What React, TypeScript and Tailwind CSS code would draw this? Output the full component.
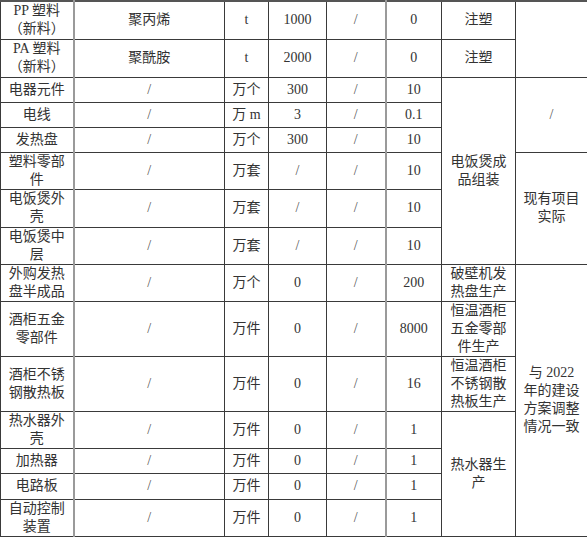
import React from 'react';

type Row = {
  h: string;
  cells: { text: string; rowSpan?: number; cls?: string }[];
};

const rows: Row[] = [
  {
    h: 'h-[38px]',
    cells: [
      { text: 'PP 塑料\n（新料）' },
      { text: '聚丙烯' },
      { text: 't' },
      { text: '1000' },
      { text: '/' },
      { text: '0' },
      { text: '注塑' },
      { text: '', rowSpan: 2 },
    ],
  },
  {
    h: 'h-[38px]',
    cells: [
      { text: 'PA 塑料\n（新料）' },
      { text: '聚酰胺' },
      { text: 't' },
      { text: '2000' },
      { text: '/' },
      { text: '0' },
      { text: '注塑' },
    ],
  },
  {
    h: 'h-[25px]',
    cells: [
      { text: '电器元件' },
      { text: '/' },
      { text: '万个' },
      { text: '300' },
      { text: '/' },
      { text: '10' },
      { text: '电饭煲成\n品组装', rowSpan: 6 },
      { text: '/', rowSpan: 3 },
    ],
  },
  {
    h: 'h-[25px]',
    cells: [
      { text: '电线' },
      { text: '/' },
      { text: '万 m' },
      { text: '3' },
      { text: '/' },
      { text: '0.1' },
    ],
  },
  {
    h: 'h-[25px]',
    cells: [
      { text: '发热盘' },
      { text: '/' },
      { text: '万个' },
      { text: '300' },
      { text: '/' },
      { text: '10' },
    ],
  },
  {
    h: 'h-[37px]',
    cells: [
      { text: '塑料零部\n件' },
      { text: '/' },
      { text: '万套' },
      { text: '/' },
      { text: '/' },
      { text: '10' },
      { text: '现有项目\n实际', rowSpan: 3 },
    ],
  },
  {
    h: 'h-[38px]',
    cells: [
      { text: '电饭煲外\n壳' },
      { text: '/' },
      { text: '万套' },
      { text: '/' },
      { text: '/' },
      { text: '10' },
    ],
  },
  {
    h: 'h-[36px]',
    cells: [
      { text: '电饭煲中\n层' },
      { text: '/' },
      { text: '万套' },
      { text: '/' },
      { text: '/' },
      { text: '10' },
    ],
  },
  {
    h: 'h-[37px]',
    cells: [
      { text: '外购发热\n盘半成品' },
      { text: '/' },
      { text: '万个' },
      { text: '0' },
      { text: '/' },
      { text: '200' },
      { text: '破壁机发\n热盘生产' },
      { text: '与 2022\n年的建设\n方案调整\n情况一致', rowSpan: 7 },
    ],
  },
  {
    h: 'h-[55px]',
    cells: [
      { text: '酒柜五金\n零部件' },
      { text: '/' },
      { text: '万件' },
      { text: '0' },
      { text: '/' },
      { text: '8000' },
      { text: '恒温酒柜\n五金零部\n件生产' },
    ],
  },
  {
    h: 'h-[55px]',
    cells: [
      { text: '酒柜不锈\n钢散热板' },
      { text: '/' },
      { text: '万件' },
      { text: '0' },
      { text: '/' },
      { text: '16' },
      { text: '恒温酒柜\n不锈钢散\n热板生产' },
    ],
  },
  {
    h: 'h-[37px]',
    cells: [
      { text: '热水器外\n壳' },
      { text: '/' },
      { text: '万件' },
      { text: '0' },
      { text: '/' },
      { text: '1' },
      { text: '热水器生\n产', rowSpan: 4 },
    ],
  },
  {
    h: 'h-[25px]',
    cells: [
      { text: '加热器' },
      { text: '/' },
      { text: '万件' },
      { text: '0' },
      { text: '/' },
      { text: '1' },
    ],
  },
  {
    h: 'h-[26px]',
    cells: [
      { text: '电路板' },
      { text: '/' },
      { text: '万件' },
      { text: '0' },
      { text: '/' },
      { text: '1' },
    ],
  },
  {
    h: 'h-[37px]',
    cells: [
      { text: '自动控制\n装置' },
      { text: '/' },
      { text: '万件' },
      { text: '0' },
      { text: '/' },
      { text: '1' },
    ],
  },
];

// column index -> extra border styling (col 1 right edge and col 6 left edge are grey, thicker)
function cellClass(col: number) {
  const base = 'border border-[#3a3a3a] px-1 py-0 text-center align-middle';
  if (col === 0) return base + ' border-r-2 border-r-[#9a9a9a]';
  if (col === 5) return base + ' border-l-2 border-l-[#9a9a9a]';
  return base;
}

export default function App() {
  return (
    <div className="w-[587px] h-[538px] overflow-hidden bg-white">
      <table
        className="table-fixed border-collapse w-[587px] border-t-2 border-t-[#555] text-[14px] leading-[18px] text-[#333]"
        style={{ fontFamily: '"Liberation Serif", "Noto Sans CJK SC", serif' }}
      >
        <colgroup>
          <col className="w-[73px]" />
          <col className="w-[151px]" />
          <col className="w-[44px]" />
          <col className="w-[58px]" />
          <col className="w-[59px]" />
          <col className="w-[56px]" />
          <col className="w-[74px]" />
          <col className="w-[72px]" />
        </colgroup>
        <tbody>
          {rows.map((r, i) => (
            <tr key={i} className={r.h}>
              {r.cells.map((c, j) => {
                // when a rowspanned cell sits in col 7/8, index j maps by position in the row
                const col = j;
                return (
                  <td key={j} rowSpan={c.rowSpan} className={cellClass(col)}>
                    {c.text.split('\n').map((line, k) => (
                      <div key={k} className={line === '/' ? 'text-[#555]' : ''}>
                        {line}
                      </div>
                    ))}
                  </td>
                );
              })}
            </tr>
          ))}
        </tbody>
      </table>
    </div>
  );
}
